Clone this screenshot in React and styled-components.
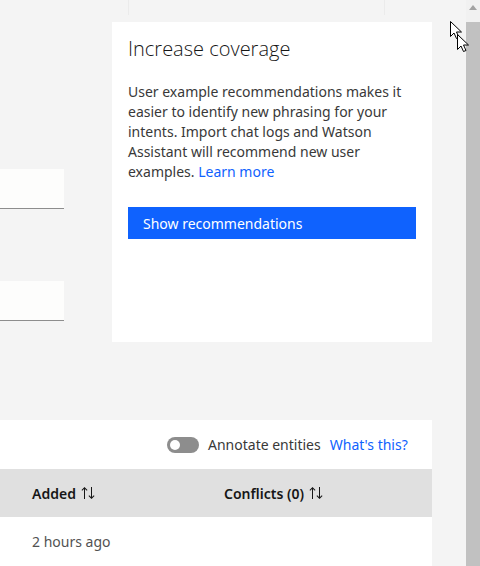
import React from 'react';
import styled, { createGlobalStyle } from 'styled-components';

const Global = createGlobalStyle`
    html, body {
        margin : 0;
        padding : 0;
        background : #f4f4f4;
        font-family : "Noto Sans", "Open Sans", sans-serif;
        overflow : hidden;
    }
`;

const Page = styled.div`
    position : relative;
    display : flex;
    width : 480px;
    height : 566px;
    overflow : hidden;
`;

const Main = styled.div`
    width : 466px;
    display : flex;
    flex-direction : column;
`;

const TopStrip = styled.div`
    height : 22px;
    display : flex;
`;

const TopCell = styled.div`
    width : ${p => p.w}px;
    height : 15px;
    border-right : 1px solid #ebebeb;
`;

const MiddleRow = styled.div`
    display : flex;
    height : 320px;
`;

const LeftCol = styled.div`
    width : 112px;
    padding-top : 147px;
    display : flex;
    flex-direction : column;
    gap : 72px;
`;

const FieldStub = styled.div`
    width : 64px;
    height : 39px;
    background : #fdfdfc;
    border-bottom : 1px solid #8d8d8d;
`;

const Card = styled.div`
    width : 320px;
    background : #ffffff;
    padding : 14px 16px 16px;
    box-sizing : border-box;
`;

const CardTitle = styled.h3`
    margin : 0;
    font-family : "Open Sans", "Noto Sans", sans-serif;
    font-size : 20px;
    font-weight : 300;
    color : #161616;
    line-height : 26px;
`;

const CardText = styled.p`
    margin : 20px 0 0;
    font-size : 14px;
    line-height : 20px;
    color : #393939;
`;

const Link = styled.a`
    color : #0f62fe;
    text-decoration : none;
`;

const PrimaryButton = styled.button`
    margin-top : 25px;
    width : 288px;
    height : 32px;
    border : none;
    background : #0f62fe;
    color : #ffffff;
    font-family : inherit;
    font-size : 14px;
    text-align : left;
    padding : 0 15px;
`;

const BottomPanel = styled.div`
    margin-top : 78px;
    width : 432px;
    flex : 1;
    background : #ffffff;
    display : flex;
    flex-direction : column;
`;

const ToolRow = styled.div`
    height : 49px;
    display : flex;
    align-items : center;
    padding-left : 167px;
    gap : 9px;
    font-size : 14px;
    color : #393939;
`;

const Toggle = styled.div`
    position : relative;
    width : 32px;
    height : 16px;
    border-radius : 8px;
    background : #8d8d8d;
    &::after {
        content : '';
        position : absolute;
        left : 3px;
        top : 3px;
        width : 10px;
        height : 10px;
        border-radius : 50%;
        background : #ffffff;
    }
`;

const HeadRow = styled.div`
    height : 48px;
    background : #e0e0e0;
    display : grid;
    grid-template-columns : 192px 1fr;
    align-items : center;
    padding-left : 32px;
`;

const HeadCell = styled.div`
    display : flex;
    align-items : center;
    gap : 4px;
    font-size : 14px;
    font-weight : 600;
    color : #161616;
`;

const BodyRow = styled.div`
    height : 48px;
    display : flex;
    align-items : center;
    padding-left : 32px;
    font-size : 14px;
    color : #525252;
`;

const Scrollbar = styled.div`
    width : 14px;
    background : #f1f1f1;
    display : flex;
    flex-direction : column;
    align-items : center;
`;

const ArrowUp = styled.div`
    margin-top : 5px;
    width : 0;
    height : 0;
    border-left : 4px solid transparent;
    border-right : 4px solid transparent;
    border-bottom : 5px solid #a3a3a3;
`;

const Thumb = styled.div`
    margin-top : 12px;
    width : 14px;
    flex : 1;
    background : #c1c1c1;
`;

const Cursor = styled.svg`
    position : absolute;
    left : 449px;
    top : 20px;
`;

function SortIcon() {
    return (
        <svg width="16" height="16" viewBox="0 0 32 32" fill="#161616">
            <path d="M27.6 20.6L24 24.2V4h-2v20.2l-3.6-3.6L17 22l6 6 6-6zM9 4L3 10l1.4 1.4L8 7.8V28h2V7.8l3.6 3.6L15 10z" />
        </svg>
    );
}

function Arrow({ x, y }) {
    return (
        <path
            transform={`translate(${x} ${y})`}
            d="M0 0 L0 15 L3.5 11.5 L6 17 L8.5 16 L6 10.5 L11 10.5 Z"
            fill="#ffffff"
            stroke="#000000"
            strokeWidth="1"
            strokeLinejoin="round"
        />
    );
}

function App() {
    return (
        <Page>
            <Global />
            <Main>
                <TopStrip>
                    <TopCell w={128} />
                    <TopCell w={255} />
                </TopStrip>
                <MiddleRow>
                    <LeftCol>
                        <FieldStub />
                        <FieldStub />
                    </LeftCol>
                    <Card>
                        <CardTitle>Increase coverage</CardTitle>
                        <CardText>
                            User example recommendations makes it easier to identify new phrasing for your intents. Import chat logs and Watson Assistant will recommend new user examples. <Link href="#">Learn more</Link>
                        </CardText>
                        <PrimaryButton>Show recommendations</PrimaryButton>
                    </Card>
                </MiddleRow>
                <BottomPanel>
                    <ToolRow>
                        <Toggle />
                        <span>Annotate entities</span>
                        <Link href="#">What's this?</Link>
                    </ToolRow>
                    <HeadRow>
                        <HeadCell>Added <SortIcon /></HeadCell>
                        <HeadCell>Conflicts (0) <SortIcon /></HeadCell>
                    </HeadRow>
                    <BodyRow>2 hours ago</BodyRow>
                </BottomPanel>
            </Main>
            <Scrollbar>
                <ArrowUp />
                <Thumb />
            </Scrollbar>
            <Cursor width="24" height="40" viewBox="0 0 24 40">
                <Arrow x={1.5} y={1.5} />
                <Arrow x={8.5} y={14.5} />
            </Cursor>
        </Page>
    );
}

export default App;
